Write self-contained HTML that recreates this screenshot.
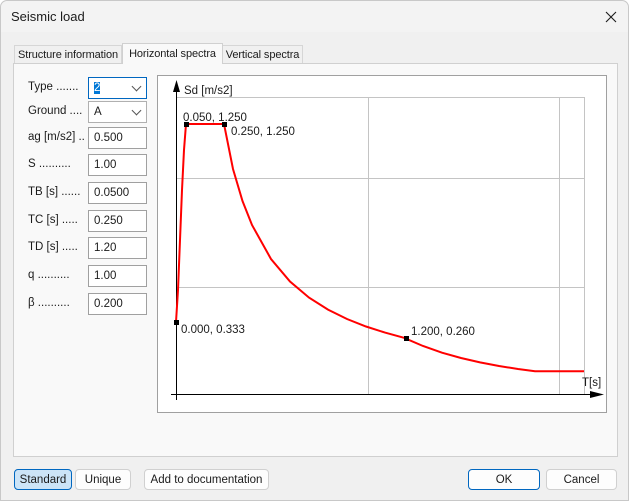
<!DOCTYPE html>
<html><head><style>
*{box-sizing:border-box;margin:0;padding:0}
body{width:629px;height:501px;background:#fff;font-family:"Liberation Sans",sans-serif;font-size:12px;color:#1b1b1b;position:relative;overflow:hidden}
.win{position:absolute;left:0;top:0;width:629px;height:501px;background:#f0f0f0;border:1px solid #c8c8c8;border-radius:7px 7px 0 0}
.title{position:absolute;left:0;top:0;width:627px;height:31px;background:#f3f3f3;border-radius:7px 7px 0 0}
.title span{position:absolute;left:10px;top:8px;font-size:13px}
.tab{position:absolute;height:19px;border:1px solid #d6d6d6;border-bottom:none;background:#f0f0f0;padding:3px 0 0 0;text-align:center;font-size:11px;white-space:nowrap;letter-spacing:-0.1px}
.panel{position:absolute;left:12px;top:62px;width:605px;height:394px;background:#f9f9f9;border:1px solid #d0d0d0}
.lbl{position:absolute;left:27px;font-size:11.5px;white-space:nowrap}
.inp{position:absolute;left:87px;width:59px;height:22px;background:#fff;border:1px solid #a0a0a0;padding:4px 0 0 5px;font-size:11.5px}
.dd{border-color:#b0b0b0}
.dd:after{content:"";position:absolute;right:6px;top:5px;width:6px;height:6px;border-right:1px solid #555;border-bottom:1px solid #555;transform:rotate(45deg)}
.btn{position:absolute;top:468px;height:21px;border:1px solid #d0d0d0;border-radius:4px;background:#fdfdfd;text-align:center;padding-top:4px;font-size:11.5px;white-space:nowrap}
</style></head><body>
<div class="win">
<div class="title"><span>Seismic load</span>
<svg style="position:absolute;left:604px;top:10px" width="12" height="12"><path d="M1 1L11 11M11 1L1 11" stroke="#1b1b1b" stroke-width="1.1"/></svg></div>
<div class="panel"></div>
<div class="tab" style="left:13px;top:44px;width:108px;height:18px">Structure information</div>
<div class="tab" style="left:221px;top:44px;width:81px;height:18px">Vertical spectra</div>
<div class="tab" style="left:121px;top:42px;width:101px;height:21px;background:#f9f9f9;border-color:#d0d0d0;padding-top:4px">Horizontal spectra</div>

<div class="lbl" style="top:80px">Type .......</div>
<div class="inp dd" style="top:76px;border-color:#0067c0"><span style="background:#0078d7;color:#fff">2</span></div>
<div class="lbl" style="top:104px">Ground ....</div>
<div class="inp dd" style="top:100px">A</div>
<div class="lbl" style="top:130px">ag [m/s2] ..</div>
<div class="inp" style="top:126px">0.500</div>
<div class="lbl" style="top:157px">S ..........</div>
<div class="inp" style="top:153px">1.00</div>
<div class="lbl" style="top:185px">TB [s] ......</div>
<div class="inp" style="top:181px">0.0500</div>
<div class="lbl" style="top:213px">TC [s] .....</div>
<div class="inp" style="top:209px">0.250</div>
<div class="lbl" style="top:240px">TD [s] .....</div>
<div class="inp" style="top:236px">1.20</div>
<div class="lbl" style="top:268px">q ..........</div>
<div class="inp" style="top:264px">1.00</div>
<div class="lbl" style="top:296px">β ..........</div>
<div class="inp" style="top:292px">0.200</div>

<svg style="position:absolute;left:-1px;top:-1px" width="629" height="501">
<rect x="157.5" y="75.5" width="449" height="337" fill="#fff" stroke="#a0a0a0"/>
<g stroke="#c4c4c4" fill="none">
<polyline points="176,97.5 584.5,97.5 584.5,394"/>
<line x1="176" y1="178.5" x2="585" y2="178.5"/>
<line x1="176" y1="287.5" x2="585" y2="287.5"/>
<line x1="368.5" y1="97" x2="368.5" y2="394"/>
<line x1="559.5" y1="97" x2="559.5" y2="394"/>
</g>
<line x1="176.5" y1="88" x2="176.5" y2="400" stroke="#000"/>
<line x1="171" y1="394.5" x2="596" y2="394.5" stroke="#000"/>
<polygon points="176.5,80 173,92 180,92" fill="#000"/>
<polygon points="604,394.5 590,391 590,398" fill="#000"/>
<polyline fill="none" stroke="#f00" stroke-width="2" points="176,322 178,290 180,240 182,190 184,150 186,124 224,124 233,169 242.5,201 252,225 271,259 290,281.5 309,297.6 328,309.6 347,319 366,326.5 385,332.6 404,337.8 423,346 442,352.7 461,358 480,362.4 499,366 518,369 535,371.3 584,371.3"/>
<rect x="174" y="320" width="5" height="5" fill="#000"/>
<rect x="184" y="122" width="5" height="5" fill="#000"/>
<rect x="222" y="122" width="5" height="5" fill="#000"/>
<rect x="404" y="336" width="5" height="5" fill="#000"/>
<g font-family="Liberation Sans" font-size="11.5" fill="#1b1b1b">
<text x="184" y="94">Sd [m/s2]</text>
<text x="183" y="121">0.050, 1.250</text>
<text x="231" y="135">0.250, 1.250</text>
<text x="181" y="333">0.000, 0.333</text>
<text x="411" y="335">1.200, 0.260</text>
<text x="582" y="386">T[s]</text>
</g>
</svg>

<div class="btn" style="left:13px;width:58px;background:#cce4f7;border-color:#0067c0">Standard</div>
<div class="btn" style="left:74px;width:56px">Unique</div>
<div class="btn" style="left:143px;width:125px">Add to documentation</div>
<div class="btn" style="left:467px;width:72px;border-color:#0067c0">OK</div>
<div class="btn" style="left:545px;width:71px">Cancel</div>
</div>
</body></html>
